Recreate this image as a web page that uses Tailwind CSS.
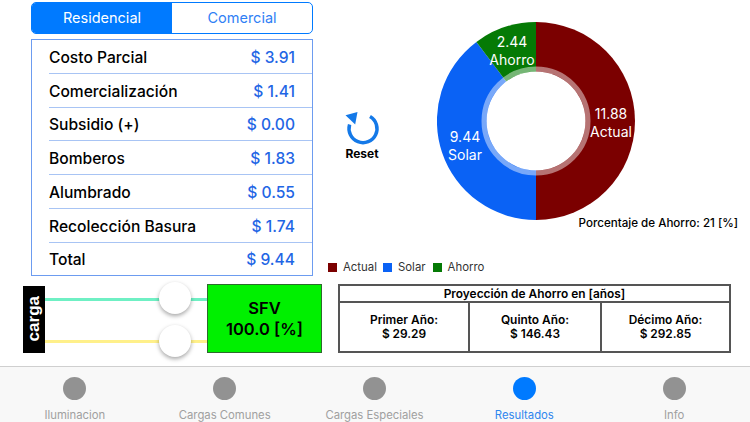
<!DOCTYPE html>
<html lang="es">
<head>
    <meta charset="UTF-8">
    <title>Resultados</title>
    <script src="https://cdn.jsdelivr.net/npm/@tailwindcss/browser@4"></script>
</head>
<body class="bg-white font-['Inter',sans-serif] text-black">
<div class="w-[750px] h-[422px] overflow-hidden flex flex-col">

    <div class="h-[284px] flex">
        <!-- Tarifas -->
        <div class="ml-[31px] w-[282px] pt-[2px]">
            <div class="h-[32px] flex border border-[#007aff] rounded-[5px] overflow-hidden text-[14.5px]">
                <div class="w-[140px] bg-[#007aff] text-white flex items-center justify-center">Residencial</div>
                <div class="flex-1 text-[#2f80f5] flex items-center justify-center">Comercial</div>
            </div>
            <div class="mt-[5px] h-[237px] border border-[#6d9cf0] flex flex-col text-[15.6px] font-medium">
                <div class="h-[34px] ml-[17px] pr-[17px] pt-[2px] flex items-center justify-between border-b border-[#a8c4f4]"><span>Costo Parcial</span><span class="text-[#1f66e5]">$ 3.91</span></div>
                <div class="h-[34px] ml-[17px] pr-[17px] pt-[2px] flex items-center justify-between border-b border-[#a8c4f4]"><span>Comercialización</span><span class="text-[#1f66e5]">$ 1.41</span></div>
                <div class="h-[33px] ml-[17px] pr-[17px] pt-[1px] flex items-center justify-between border-b border-[#a8c4f4]"><span>Subsidio (+)</span><span class="text-[#1f66e5]">$ 0.00</span></div>
                <div class="h-[34px] ml-[17px] pr-[17px] pt-[2px] flex items-center justify-between border-b border-[#a8c4f4]"><span>Bomberos</span><span class="text-[#1f66e5]">$ 1.83</span></div>
                <div class="h-[34px] ml-[17px] pr-[17px] pt-[2px] flex items-center justify-between border-b border-[#a8c4f4]"><span>Alumbrado</span><span class="text-[#1f66e5]">$ 0.55</span></div>
                <div class="h-[34px] ml-[17px] pr-[17px] pt-[2px] flex items-center justify-between border-b border-[#a8c4f4]"><span>Recolección Basura</span><span class="text-[#1f66e5]">$ 1.74</span></div>
                <div class="flex-1 ml-[17px] pr-[17px] pt-[1px] flex items-center justify-between"><span>Total</span><span class="text-[#1f66e5]">$ 9.44</span></div>
            </div>
        </div>

        <!-- Grafico -->
        <div class="ml-[15px] flex-1 flex flex-col">
            <div class="flex h-[220px]">
                <div class="w-[68px] pt-[112px] flex flex-col items-center">
                    <svg class="w-[36px] h-[36px]" viewBox="0 0 36 36" fill="none">
                        <path d="M26 4.5A14 14 0 1 1 5.6 12.6" stroke="#1479e8" stroke-width="3.5"/>
                        <path d="M1.5 3.3 L13.5 0 L11.2 12.5 Z" fill="#1479e8"/>
                    </svg>
                    <span class="text-[12px] font-bold mt-[-1px] leading-[14px]">Reset</span>
                </div>
                <div class="relative ml-[41px] mt-[22px] w-[198px] h-[198px] text-white text-[14px] leading-[18px] text-center">
                    <svg class="w-full h-full" viewBox="-99 -99 198 198">
                        <path d="M0 -99 A99 99 0 0 1 0 99 Z" fill="#7b0000"/>
                        <path d="M0 99 A99 99 0 0 1 -59.6 -79.1 L0 0 Z" fill="#0a62f5"/>
                        <path d="M-59.6 -79.1 A99 99 0 0 1 0 -99 L0 0 Z" fill="#057a05"/>
                        <circle r="52" fill="none" stroke="#fff" stroke-opacity="0.45" stroke-width="5"/>
                        <circle r="49.5" fill="#fff"/>
                    </svg>
                    <div class="absolute left-[149px] top-[83px] w-[50px]">11.88<br>Actual</div>
                    <div class="absolute left-[3px] top-[106px] w-[50px]">9.44<br>Solar</div>
                    <div class="absolute left-[50px] top-[11px] w-[50px]">2.44<br>Ahorro</div>
                </div>
            </div>
            <div class="text-[11.6px] font-medium leading-[14px] text-right pr-[12px] mt-[-4px]">Porcentaje de Ahorro: 21 [%]</div>
            <div class="flex items-center text-[11.4px] leading-[14px] text-[#333] mt-[30px]">
                <span class="w-[9px] h-[9px] bg-[#7b0000]"></span><span class="ml-[6px]">Actual</span>
                <span class="w-[9px] h-[9px] bg-[#0a62f5] ml-[6px]"></span><span class="ml-[6px]">Solar</span>
                <span class="w-[9px] h-[9px] bg-[#057a05] ml-[7px]"></span><span class="ml-[6px]">Ahorro</span>
            </div>
        </div>
    </div>

    <div class="h-[70px] flex items-start">
        <!-- Sliders -->
        <div class="ml-[23px] mt-[2px] w-[22px] h-[67px] bg-black text-white font-bold font-['Liberation_Sans',sans-serif] text-[17px] flex items-center justify-center">
            <span class="[writing-mode:vertical-rl] rotate-180 mt-[-1px]">carga</span>
        </div>
        <div class="relative w-[162px] h-[70px]">
            <div class="absolute left-0 right-0 top-[14px] h-[3px] bg-[#6ff0c4]"></div>
            <div class="absolute left-0 right-0 top-[56px] h-[3px] bg-[#fff08a]"></div>
            <div class="absolute left-[114px] top-[-2px] w-[32px] h-[32px] rounded-full bg-white shadow-[0_2px_4px_rgba(0,0,0,0.35)]"></div>
            <div class="absolute left-[114px] top-[41px] w-[32px] h-[32px] rounded-full bg-white shadow-[0_2px_4px_rgba(0,0,0,0.35)]"></div>
        </div>
        <div class="w-[115px] h-[69px] bg-[#00f000] border border-[#2d6b2d] flex flex-col items-center justify-center font-semibold text-[16.5px] leading-[21px] pt-[1px]">
            <span>SFV</span><span>100.0 [%]</span>
        </div>
        <!-- Proyeccion -->
        <div class="ml-[16px] w-[393px] h-[69px] border-2 border-[#555] flex flex-col text-[11.9px] font-semibold">
            <div class="h-[17px] border-b-2 border-[#555] flex items-center justify-center">Proyección de Ahorro en [años]</div>
            <div class="flex-1 flex text-center leading-[14px]">
                <div class="w-[130px] border-r-2 border-[#555] flex flex-col items-center justify-center"><span>Primer Año:</span><span>$ 29.29</span></div>
                <div class="w-[132px] border-r-2 border-[#555] flex flex-col items-center justify-center"><span>Quinto Año:</span><span>$ 146.43</span></div>
                <div class="flex-1 flex flex-col items-center justify-center"><span>Décimo Año:</span><span>$ 292.85</span></div>
            </div>
        </div>
    </div>

    <!-- Tab bar -->
    <div class="mt-[12px] flex-1 bg-[#f8f8f8] border-t border-[#cfcfcf] pr-[1px] grid grid-cols-5 text-[11.3px] text-[#a0a0a0] text-center">
        <div class="flex flex-col items-center pt-[10px]"><span class="w-[23px] h-[23px] rounded-full bg-[#929292]"></span><span class="mt-[8px] leading-[14px]">Iluminacion</span></div>
        <div class="flex flex-col items-center pt-[10px]"><span class="w-[23px] h-[23px] rounded-full bg-[#929292]"></span><span class="mt-[8px] leading-[14px]">Cargas Comunes</span></div>
        <div class="flex flex-col items-center pt-[10px]"><span class="w-[23px] h-[23px] rounded-full bg-[#929292]"></span><span class="mt-[8px] leading-[14px]">Cargas Especiales</span></div>
        <div class="flex flex-col items-center pt-[10px] text-[#2f86ee]"><span class="w-[23px] h-[23px] rounded-full bg-[#007aff]"></span><span class="mt-[8px] leading-[14px]">Resultados</span></div>
        <div class="flex flex-col items-center pt-[10px]"><span class="w-[23px] h-[23px] rounded-full bg-[#929292]"></span><span class="mt-[8px] leading-[14px]">Info</span></div>
    </div>
</div>
</body>
</html>
